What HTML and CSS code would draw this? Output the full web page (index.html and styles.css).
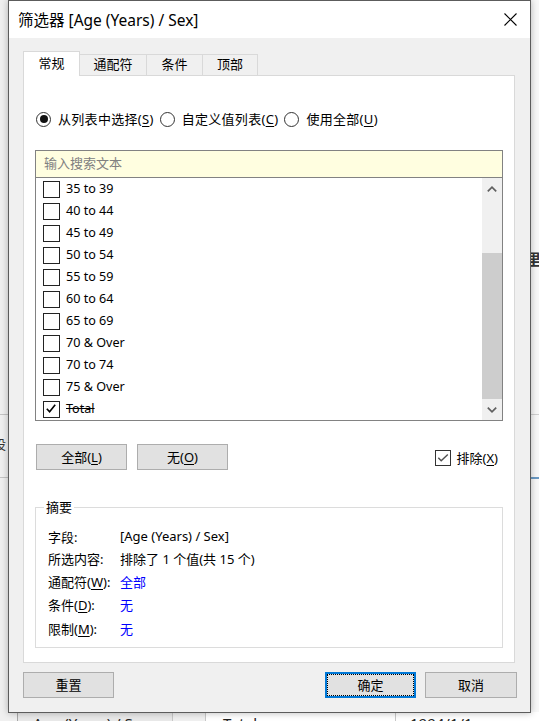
FILE: index.html
```html
<!DOCTYPE html>
<html lang="zh-CN">
<head>
<meta charset="utf-8">
<title>筛选器</title>
<link rel="stylesheet" href="styles.css">
</head>
<body>
<div class="backdrop">
  <div class="bd-left">
    <div class="bd-lrow bd-lrow1"></div>
    <div class="bd-lrow bd-lrow2"><span class="bd-lglyph">设</span></div>
  </div>
  <div class="bd-right">
    <span class="bd-rglyph">里</span>
    <div class="bd-rline"></div>
    <div class="bd-rblue"></div>
  </div>
  <div class="bd-bottom">
    <div class="bd-cell bd-c0"></div>
    <div class="bd-cell bd-c1">Age (Years) / Sex</div>
    <div class="bd-cell bd-c2"></div>
    <div class="bd-cell bd-c3">Total</div>
    <div class="bd-cell bd-c4">1994/1/1</div>
  </div>
</div>

<div class="dialog">
  <div class="titlebar">
    <span class="title">筛选器 [Age (Years) / Sex]</span>
    <svg class="close" width="13" height="13" viewBox="0 0 13 13"><path d="M0.5 0.5 L12.5 12.5 M12.5 0.5 L0.5 12.5" stroke="#000" stroke-width="1.1" fill="none"/></svg>
  </div>
  <div class="main">
    <div class="tabs">
      <div class="tab active t1">常规</div>
      <div class="tab t2">通配符</div>
      <div class="tab t3">条件</div>
      <div class="tab t4">顶部</div>
    </div>
    <div class="panel">
      <div class="radios">
        <label class="radio"><span class="rb on"></span><span class="rtext">从列表中选择(<u>S</u>)</span></label>
        <label class="radio"><span class="rb"></span><span class="rtext">自定义值列表(<u>C</u>)</span></label>
        <label class="radio"><span class="rb"></span><span class="rtext">使用全部(<u>U</u>)</span></label>
      </div>
      <div class="listbox">
        <div class="search">输入搜索文本</div>
        <div class="list">
          <div class="items">
            <div class="item"><span class="cb"></span>35 to 39</div>
            <div class="item"><span class="cb"></span>40 to 44</div>
            <div class="item"><span class="cb"></span>45 to 49</div>
            <div class="item"><span class="cb"></span>50 to 54</div>
            <div class="item"><span class="cb"></span>55 to 59</div>
            <div class="item"><span class="cb"></span>60 to 64</div>
            <div class="item"><span class="cb"></span>65 to 69</div>
            <div class="item"><span class="cb"></span>70 &amp; Over</div>
            <div class="item"><span class="cb"></span>70 to 74</div>
            <div class="item"><span class="cb"></span>75 &amp; Over</div>
            <div class="item"><span class="cb"><svg width="15" height="15" viewBox="0 0 15 15"><path d="M2.8 6.8 L5.6 9.8 L11.2 2.8" stroke="#000" stroke-width="1.6" fill="none"/></svg></span><span class="struck">Total</span></div>
          </div>
          <div class="scrollbar">
            <div class="sb-btn"><svg width="10" height="6" viewBox="0 0 10 6"><path d="M0.8 5.4 L5 1.2 L9.2 5.4" stroke="#606060" stroke-width="1.7" fill="none"/></svg></div>
            <div class="sb-track"><div class="sb-thumb"></div></div>
            <div class="sb-btn"><svg width="10" height="6" viewBox="0 0 10 6"><path d="M0.8 0.6 L5 4.8 L9.2 0.6" stroke="#606060" stroke-width="1.7" fill="none"/></svg></div>
          </div>
        </div>
      </div>
      <div class="btnrow">
        <button class="btn">全部(<u>L</u>)</button>
        <button class="btn btn-none">无(<u>O</u>)</button>
        <label class="exclude"><span class="cb2"><svg width="14" height="14" viewBox="0 0 14 14"><path d="M2.3 6.8 L5.2 9.8 L11.8 3.4" stroke="#505050" stroke-width="1.4" fill="none"/></svg></span><span class="rtext">排除(<u>X</u>)</span></label>
      </div>
      <div class="summary">
        <span class="legend">摘要</span>
        <div class="srows">
          <div class="slabel r1">字段:</div><div class="sval r1">[Age (Years) / Sex]</div>
          <div class="slabel">所选内容:</div><div class="sval">排除了 1 个值(共 15 个)</div>
          <div class="slabel">通配符(<u>W</u>):</div><div class="sval blue">全部</div>
          <div class="slabel">条件(<u>D</u>):</div><div class="sval blue">无</div>
          <div class="slabel">限制(<u>M</u>):</div><div class="sval blue">无</div>
        </div>
      </div>
    </div>
    <div class="footer">
      <button class="btn">重置</button>
      <button class="btn primary">确定</button>
      <button class="btn btn-cancel">取消</button>
    </div>
  </div>
</div>
</body>
</html>
```

FILE: styles.css
```css
* { box-sizing: border-box; }
html, body { margin: 0; padding: 0; }
body {
  width: 539px;
  height: 721px;
  overflow: hidden;
  position: relative;
  background: #f0f0f0;
  font-family: "Noto Sans", "Noto Sans CJK SC", sans-serif;
  font-size: 13px;
  color: #000;
}
u { text-decoration: underline; text-underline-offset: 2px; }

/* ---------- backdrop application (behind the window) ---------- */
.backdrop { position: absolute; inset: 0; z-index: 0; }
.bd-left { position: absolute; left: 0; top: 0; width: 8px; height: 713px; background: #f0f0f0; }
.bd-lrow { position: absolute; left: 0; width: 8px; border-top: 1px solid #c4c4c4; }
.bd-lrow1 { top: 414px; height: 1px; }
.bd-lrow2 { top: 477px; height: 1px; }
.bd-lglyph { position: absolute; left: -7px; top: -42px; font-size: 13px; color: #333; line-height: 16px; }
.bd-right { position: absolute; left: 529px; top: 0; width: 10px; height: 721px; background: #f8f8f8; overflow: hidden; }
.bd-rglyph { position: absolute; left: -3px; top: 250px; font-size: 15px; line-height: 18px; color: #333; font-weight: bold; }
.bd-rline { position: absolute; left: 0; top: 414px; width: 10px; height: 1px; background: #d0d0d0; }
.bd-rblue { position: absolute; left: 0; top: 477px; width: 10px; height: 2px; background: #6b9ac4; }
.bd-bottom {
  position: absolute; left: 0; top: 712px; width: 539px; height: 9px;
  display: flex; overflow: hidden; background: #fff;
}
.bd-cell { height: 9px; border-right: 1px solid #c8c8c8; font-size: 15px; line-height: 18px; color: #222; padding-top: 2px; white-space: nowrap; overflow: hidden; }
.bd-c0 { width: 18px; background: #f0f0f0; border-right-color: #a8a8a8; }
.bd-c1 { width: 155px; background: #e9e9e9; padding-left: 15px; }
.bd-c2 { width: 33px; background: #f0f0f0; }
.bd-c3 { width: 190px; padding-left: 17px; }
.bd-c4 { flex: 1; padding-left: 14px; border-right: none; }

/* ---------- dialog window ---------- */
.dialog {
  position: relative;
  z-index: 1;
  margin-left: 8px;
  width: 523px;
  height: 713px;
  border: 1px solid #5c5c5c;
  background: #f0f0f0;
  display: flex;
  flex-direction: column;
  box-shadow: 0 0 7px rgba(0, 0, 0, 0.28);
}
.titlebar {
  flex: none;
  height: 37px;
  background: #fff;
  display: flex;
  align-items: center;
  justify-content: space-between;
  padding: 0 13px 0 9px;
}
.title { font-size: 15.5px; line-height: 20px; color: #000; }
.close { display: block; }

.main { flex: 1; display: flex; flex-direction: column; padding-top: 13px; }

/* tabs */
.tabs { display: flex; align-items: flex-end; margin-left: 14px; height: 24px; }
.tab {
  height: 21px;
  line-height: 19px;
  text-align: center;
  border: 1px solid #d9d9d9;
  border-bottom: none;
  background: #f0f0f0;
  margin-left: -1px;
}
.tab.t1 { margin-left: 0; width: 57px; }
.tab.t2 { width: 68px; }
.tab.t3 { width: 57px; }
.tab.t4 { width: 56px; }
.tab.active {
  height: 25px;
  line-height: 22px;
  background: #fff;
  margin-bottom: -1px;
  position: relative;
  z-index: 2;
}

/* panel */
.panel {
  margin: 0 15px 0 14px;
  height: 588px;
  border: 1px solid #d9d9d9;
  background: #fff;
  padding: 33px 0 14px;
  display: flex;
  flex-direction: column;
}
.radios { height: 20px; display: flex; align-items: center; padding-left: 12px; }
.radio { display: flex; align-items: center; gap: 7px; margin-right: 6px; line-height: 20px; white-space: nowrap; }
.radio .rtext { letter-spacing: 0.3px; }
.rtext { white-space: nowrap; }
.rb {
  width: 15px; height: 15px; border-radius: 50%;
  border: 1px solid #333;
  display: flex; align-items: center; justify-content: center;
  flex: none;
}
.rb.on::after { content: ""; width: 8px; height: 8px; border-radius: 50%; background: #111; }

/* listbox */
.listbox { margin: 21px 11px 0; border: 1px solid #828282; height: 271px; display: flex; flex-direction: column; }
.search {
  height: 27px;
  border-bottom: 1px solid #828282;
  background: #fffee0;
  color: #808080;
  padding-left: 8px;
  line-height: 25px;
}
.list { flex: 1; display: flex; }
.items { flex: 1; }
.item { height: 22px; display: flex; align-items: center; padding-left: 7px; gap: 6px; white-space: nowrap; line-height: 20px; font-size: 12.6px; }
.cb {
  width: 17px; height: 17px; border: 1px solid #222; background: #fff;
  display: flex; align-items: center; justify-content: center; flex: none;
}
.cb svg { display: block; }
.struck { text-decoration: line-through; }
.scrollbar { width: 20px; background: #f0f0f0; display: flex; flex-direction: column; }
.sb-btn { height: 21px; display: flex; align-items: center; justify-content: center; flex: none; }
.sb-btn svg { display: block; }
.sb-track { flex: 1; display: flex; flex-direction: column; justify-content: flex-end; }
.sb-thumb { height: 146px; background: #cdcdcd; }

/* buttons */
.btn {
  font-family: "Noto Sans", "Noto Sans CJK SC", sans-serif;
  font-size: 13px;
  color: #000;
  width: 91px;
  height: 26px;
  padding: 0;
  background: #e1e1e1;
  border: 1px solid #adadad;
  border-radius: 0;
  line-height: 22px;
}
.btnrow { margin-top: 23px; height: 26px; display: flex; align-items: center; padding: 0 16px 0 12px; }
.btn-none { margin-left: 10px; }
.exclude { margin-left: auto; display: flex; align-items: center; gap: 6px; line-height: 20px; margin-top: 1px; }
.cb2 {
  width: 16px; height: 16px; border: 1px solid #333;
  display: flex; align-items: center; justify-content: center;
}
.cb2 svg { display: block; }

/* summary group */
.summary {
  position: relative;
  margin: 37px 11px 0;
  border: 1px solid #dcdcdc;
  padding: 17px 0 6px 12px;
  height: 141px;
}
.legend {
  position: absolute;
  left: 8px;
  top: -10px;
  padding: 0 2px;
  background: #fff;
  line-height: 18px;
}
.srows {
  display: grid;
  grid-template-columns: 72px 1fr;
  grid-template-rows: 22px 22px 24px 23px 24px;
  align-items: center;
  white-space: nowrap;
}
.blue { color: #0000ff; }

/* footer */
.footer { margin-top: 9px; display: flex; padding: 0 13px 0 14px; }
.primary {
  margin-left: auto;
  border: 1px solid #0078d7;
  box-shadow: inset 0 0 0 1px #0078d7;
  outline: 1px dotted #000;
  outline-offset: -3px;
}
.btn-cancel { margin-left: 9px; width: 92px; }
```
